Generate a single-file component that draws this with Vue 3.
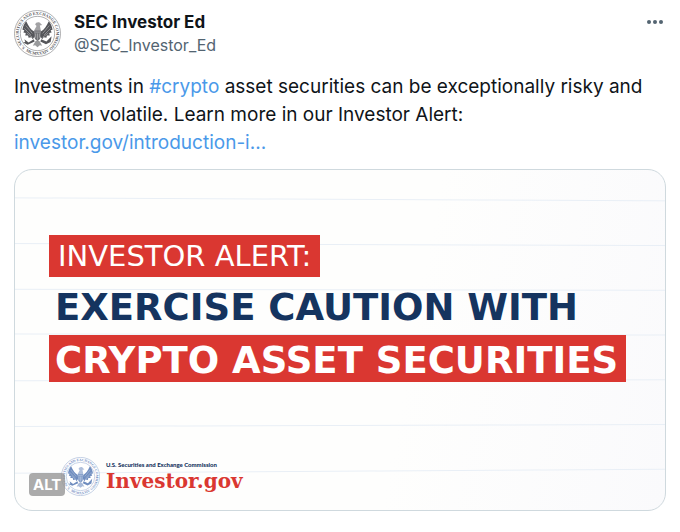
<script setup>
import { ref } from 'vue';

const post = ref({
  name: 'SEC Investor Ed',
  handle: '@SEC_Investor_Ed',
  hashtag: '#crypto',
  link: 'investor.gov/introduction-i...',
});

// Ruled paper lines: left and right heights on a 650x342 sheet
const rules = [
  [28, 31],
  [74, 76],
  [120, 121],
  [165, 166],
  [212, 211],
  [258, 256],
  [305, 301],
];
</script>

<template>
  <article class="post">
    <header class="post-header">
      <svg class="avatar" viewBox="0 0 100 100" role="img" aria-label="SEC">
        <!-- Agency seal, reused by the brand row below -->
        <g id="seal">
          <path id="seal-top" d="M24.5 80.8 A40 40 0 1 1 75.5 80.8" fill="none" />
          <path id="seal-bottom" d="M20 84 A45.5 45.5 0 0 0 80 84" fill="none" />
          <circle cx="50" cy="50" r="49" fill="#fff" stroke="currentColor" stroke-width="1" />
          <circle cx="50" cy="50" r="36.5" fill="none" stroke="currentColor" stroke-width="1" />
          <text class="seal-text">
            <textPath href="#seal-top" startOffset="50%" text-anchor="middle">U.S. SECURITIES AND EXCHANGE COMMISSION</textPath>
          </text>
          <text class="seal-text">
            <textPath href="#seal-bottom" startOffset="50%" text-anchor="middle">MCMXXXIV</textPath>
          </text>
          <g fill="currentColor">
            <path d="M43 46 C36 43 31 35 26 24 C22 28 19 35 18 42 L22 43 L20 48 L25 49 L24 54 L30 54 L31 59 L37 58 L40 62 L44 56 Z" />
            <path d="M57 46 C64 43 69 35 74 24 C78 28 81 35 82 42 L78 43 L80 48 L75 49 L76 54 L70 54 L69 59 L63 58 L60 62 L56 56 Z" />
            <path d="M45 31 C46 25 54 24 57 29 L60 32 L55 33 L57 43 L43 43 L48 34 Z" opacity=".55" />
            <path d="M43 43 H57 V54 C57 60 54 64 50 66 C46 64 43 60 43 54 Z" opacity=".85" />
            <path d="M46 66 L40 76 L45 75 L50 79 L55 75 L60 76 L54 66 Z" opacity=".6" />
            <path d="M42 62 L31 69 L22 62 L24 68 L19 69 L29 74 L44 67 Z" />
            <path d="M58 62 L69 67 L80 56 L78 68 L68 73 L56 67 Z" />
          </g>
          <g fill="none" stroke="#fff" stroke-width="1.2" opacity=".6">
            <path d="M25 33 L39 50 M22 39 L36 53 M27 49 L39 58 M75 33 L61 50 M78 39 L64 53 M73 49 L61 58" />
            <path d="M46 50 V59 M50 50 V63 M54 50 V59 M44 47 H56" />
          </g>
        </g>
      </svg>
      <div class="author">
        <a class="name" href="#">{{ post.name }}</a>
        <a class="handle" href="#">{{ post.handle }}</a>
      </div>
      <button class="more" type="button" aria-label="More">
        <svg viewBox="0 0 18 6" width="18" height="6">
          <circle cx="3" cy="3" r="2" />
          <circle cx="9" cy="3" r="2" />
          <circle cx="15" cy="3" r="2" />
        </svg>
      </button>
    </header>

    <p class="post-text">
      Investments in <a href="#">{{ post.hashtag }}</a> asset securities can be exceptionally risky and
      are often volatile. Learn more in our Investor Alert:<br />
      <a href="#">{{ post.link }}</a>
    </p>

    <div class="media">
      <svg class="paper" viewBox="0 0 650 342" preserveAspectRatio="none" aria-hidden="true">
        <line v-for="(rule, i) in rules" :key="i" x1="0" :y1="rule[0]" x2="650" :y2="rule[1]" />
      </svg>
      <div class="headline">
        <span class="kicker">INVESTOR ALERT:</span>
        <span class="title">EXERCISE CAUTION WITH</span>
        <span class="title boxed">CRYPTO ASSET SECURITIES</span>
      </div>
      <div class="brand">
        <svg class="brand-seal" viewBox="0 0 100 100" aria-hidden="true"><use href="#seal" /></svg>
        <div class="brand-text">
          <span class="agency">U.S. Securities and Exchange Commission</span>
          <span class="site">Investor.gov</span>
        </div>
      </div>
      <button class="alt" type="button">ALT</button>
    </div>
  </article>
</template>

<style>
body {
  background: #fff;
}
</style>

<style scoped>
.seal-text {
  font-family: "Liberation Serif", serif;
  font-size: 9px;
  font-weight: bold;
  fill: currentColor;
}
.post {
  padding: 10px 14px 20px;
  font-family: Inter, "Liberation Sans", sans-serif;
  color: #0f1419;
}
.post-header {
  display: flex;
  align-items: flex-start;
  gap: 13px;
}
.avatar {
  width: 47px;
  height: 47px;
  color: #55565a;
}
.author {
  display: flex;
  flex: 1;
  flex-direction: column;
  padding-top: 1px;
  font-size: 17px;
  line-height: 23px;
}
.author a {
  align-self: flex-start;
  text-decoration: none;
}
.name {
  color: #0f1419;
  font-weight: 700;
}
.author .handle {
  color: #536471;
  font-size: 16px;
}
.more {
  display: flex;
  padding: 9px 2px;
  border: none;
  background: none;
  cursor: pointer;
}
.more svg {
  fill: #536471;
}
.post-text {
  margin: 16px 0 12px;
  font-size: 19px;
  line-height: 28px;
}
.post-text a {
  color: #4a99e9;
  text-decoration: none;
}
.media {
  position: relative;
  display: flex;
  flex-direction: column;
  overflow: hidden;
  border: 1px solid #cfd9de;
  border-radius: 18px;
  background: linear-gradient(100deg, #fefefd 60%, #fafafc);
}
.paper {
  position: absolute;
  inset: 0;
  width: 100%;
  height: 100%;
}
.paper line {
  stroke: #e9eff6;
  stroke-width: 1;
}
.headline {
  position: relative;
  display: flex;
  flex-direction: column;
  align-items: flex-start;
  padding: 65px 34px 0;
  font-family: "DejaVu Sans", sans-serif;
}
.kicker {
  padding: 0 9px;
  background: #da3731;
  color: #fff;
  font-size: 29px;
  line-height: 42px;
}
.title {
  padding: 4px 8px 0 6px;
  color: #15345f;
  font-size: 37px;
  font-weight: 700;
  line-height: 54px;
  white-space: nowrap;
}
.title.boxed {
  background: #da3731;
  color: #fff;
  line-height: 43px;
}
.brand {
  position: relative;
  display: flex;
  align-items: center;
  gap: 6px;
  padding: 75px 46px 14px;
}
.brand-seal {
  width: 39px;
  height: 39px;
  color: #6f8dbf;
}
.brand-text {
  display: flex;
  flex-direction: column;
}
.agency {
  color: #15345f;
  font-family: Lato, sans-serif;
  font-size: 6px;
  font-weight: 900;
  line-height: 8px;
}
.site {
  color: #da3731;
  font-family: "DejaVu Serif", serif;
  font-size: 20px;
  font-weight: 700;
  line-height: 24px;
}
.alt {
  position: absolute;
  left: 14px;
  bottom: 14px;
  padding: 0 4px;
  border: none;
  border-radius: 4px;
  background: rgba(150, 150, 150, 0.8);
  color: #fff;
  font-family: inherit;
  font-size: 15px;
  font-weight: 700;
  line-height: 23px;
  cursor: pointer;
}
</style>
